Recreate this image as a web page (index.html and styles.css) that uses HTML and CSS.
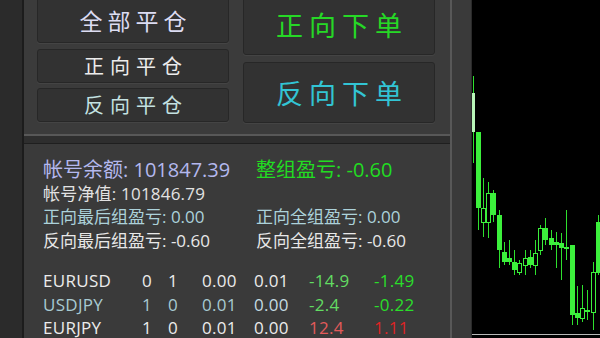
FILE: index.html
```html
<!DOCTYPE html>
<html lang="zh-CN">
<head>
<meta charset="utf-8">
<title>交易面板</title>
<link rel="stylesheet" href="styles.css">
</head>
<body>
<div class="app">
  <div class="rail"></div>
  <div class="panel">
    <div class="actions">
      <div class="col col-left">
        <button class="btn btn-all">全部平仓</button>
        <button class="btn btn-sm btn-long">正向平仓</button>
        <button class="btn btn-sm btn-short">反向平仓</button>
      </div>
      <div class="col col-right">
        <button class="btn btn-lg btn-buy">正向下单</button>
        <button class="btn btn-lg btn-sell">反向下单</button>
      </div>
    </div>
    <div class="info">
      <div class="stats">
        <div class="stat s-balance">帐号余额: 101847.39</div>
        <div class="stat s-total">整组盈亏: -0.60</div>
        <div class="stat s-equity">帐号净值: 101846.79</div>
        <div class="stat"></div>
        <div class="stat s-long">正向最后组盈亏: 0.00</div>
        <div class="stat s-long">正向全组盈亏: 0.00</div>
        <div class="stat s-short">反向最后组盈亏: -0.60</div>
        <div class="stat s-short">反向全组盈亏: -0.60</div>
      </div>
      <div class="table">
        <div class="row r-white">
          <span>EURUSD</span><span>0</span><span>1</span><span>0.00</span><span>0.01</span><span class="g1">-14.9</span><span class="g2">-1.49</span>
        </div>
        <div class="row r-cyan">
          <span>USDJPY</span><span>1</span><span>0</span><span>0.01</span><span class="c2">0.00</span><span class="g1">-2.4</span><span class="g2">-0.22</span>
        </div>
        <div class="row r-white">
          <span>EURJPY</span><span>1</span><span>0</span><span>0.01</span><span>0.00</span><span class="red1">12.4</span><span class="red2">1.11</span>
        </div>
      </div>
    </div>
  </div>
  <div class="gutter"></div>
  <div class="chart">
    <svg class="candles" width="128" height="338" viewBox="0 0 128 338">
      <g stroke="#2ee02e" stroke-width="1" shape-rendering="crispEdges">
        <line x1="1.5" y1="76" x2="1.5" y2="163"/>
        <line x1="6.5" y1="132" x2="6.5" y2="230"/>
        <line x1="11.5" y1="178" x2="11.5" y2="237"/>
        <line x1="16.5" y1="182" x2="16.5" y2="238"/>
        <line x1="21.5" y1="190" x2="21.5" y2="222"/>
        <line x1="27.5" y1="210" x2="27.5" y2="268"/>
        <line x1="32.5" y1="242" x2="32.5" y2="265"/>
        <line x1="37.5" y1="240" x2="37.5" y2="265"/>
        <line x1="42.5" y1="250" x2="42.5" y2="275"/>
        <line x1="47.5" y1="260" x2="47.5" y2="275"/>
        <line x1="53.5" y1="250" x2="53.5" y2="275"/>
        <line x1="58.5" y1="250" x2="58.5" y2="268"/>
        <line x1="63.5" y1="240" x2="63.5" y2="275"/>
        <line x1="68.5" y1="225" x2="68.5" y2="255"/>
        <line x1="73.5" y1="218" x2="73.5" y2="245"/>
        <line x1="79.5" y1="230" x2="79.5" y2="250"/>
        <line x1="84.5" y1="232" x2="84.5" y2="268"/>
        <line x1="89.5" y1="233" x2="89.5" y2="280"/>
        <line x1="94.5" y1="210" x2="94.5" y2="260"/>
        <line x1="100.5" y1="245" x2="100.5" y2="325"/>
        <line x1="105.5" y1="286" x2="105.5" y2="325"/>
        <line x1="110.5" y1="285" x2="110.5" y2="322"/>
        <line x1="115.5" y1="290" x2="115.5" y2="320"/>
        <line x1="121.5" y1="262" x2="121.5" y2="330"/>
        <line x1="126.5" y1="215" x2="126.5" y2="275"/>
      </g>
      <g fill="#3cf03c" shape-rendering="crispEdges">
        <rect x="0" y="93" width="3" height="39" fill="#b8f5b8"/>
        <rect x="4" y="132" width="5" height="76"/>
        <rect x="19" y="193" width="5" height="22"/>
        <rect x="25" y="215" width="5" height="35"/>
        <rect x="30" y="252" width="5" height="10"/>
        <rect x="35" y="258" width="5" height="4"/>
        <rect x="40" y="262" width="5" height="8"/>
        <rect x="56" y="257" width="5" height="8"/>
        <rect x="71" y="228" width="5" height="12"/>
        <rect x="77" y="238" width="5" height="7"/>
        <rect x="82" y="242" width="5" height="3"/>
        <rect x="87" y="243" width="5" height="5"/>
        <rect x="92" y="247" width="5" height="2"/>
        <rect x="98" y="245" width="5" height="70"/>
        <rect x="103" y="313" width="5" height="5"/>
        <rect x="113" y="310" width="5" height="2"/>
        <rect x="124" y="222" width="5" height="51"/>
      </g>
      <g fill="#000" stroke="#3cf03c" stroke-width="1" shape-rendering="crispEdges">
        <rect x="9.5" y="208.5" width="4" height="14"/>
        <rect x="14.5" y="193.5" width="4" height="29"/>
        <rect x="45.5" y="263.5" width="4" height="9"/>
        <rect x="51.5" y="258.5" width="4" height="7"/>
        <rect x="61.5" y="253.5" width="4" height="12"/>
        <rect x="66.5" y="228.5" width="4" height="22"/>
        <rect x="108.5" y="308.5" width="4" height="10"/>
        <rect x="119.5" y="272.5" width="4" height="40"/>
      </g>
      <line x1="0" y1="334.5" x2="128" y2="334.5" stroke="#b8b8b8" stroke-width="1"/>
    </svg>
  </div>
</div>
</body>
</html>
```

FILE: styles.css
```css
* {
  box-sizing: border-box;
}

html, body {
  margin: 0;
  padding: 0;
}

body {
  width: 600px;
  height: 338px;
  overflow: hidden;
  background: #2b2b2b;
  font-family: "Open Sans", "Noto Sans CJK SC", sans-serif;
}

.app {
  display: flex;
  height: 338px;
}

.rail {
  width: 24px;
  flex: none;
  background: #2b2b2b;
  border-right: 2px solid #1c1c1c;
}

.panel {
  width: 428px;
  flex: none;
  display: flex;
  flex-direction: column;
  background: #2e2e2e;
  border-right: 2px solid #585858;
}

.actions {
  margin-top: -6px;
  height: 142px;
  flex: none;
  display: flex;
  gap: 14px;
  padding-left: 13px;
  background: #3b3b3b;
  border-bottom: 2px solid #585858;
}

.col {
  width: 192px;
  display: flex;
  flex-direction: column;
}

.col-left {
  padding-top: 3px;
}

.btn {
  display: flex;
  align-items: center;
  justify-content: center;
  padding: 0;
  background: #323232;
  border: 1px solid #272727;
  border-radius: 3px;
  box-shadow: 0 1px 0 #444444;
  font-family: "Noto Sans CJK SC", sans-serif;
  font-weight: 400;
  line-height: 1;
}

.btn-all {
  height: 46px;
  font-size: 23px;
  letter-spacing: 5px;
  padding-left: 5px;
  color: #dcdcf2;
}

.btn-sm {
  height: 34px;
  font-size: 20px;
  letter-spacing: 6px;
  padding-left: 6px;
}

.btn-long {
  margin-top: 6px;
  color: #ececec;
}

.btn-short {
  margin-top: 5px;
  color: #c4e2e2;
}

.btn-lg {
  height: 61px;
  font-size: 27px;
  letter-spacing: 6px;
  padding-left: 6px;
}

.btn-buy {
  color: #26d826;
}

.btn-sell {
  margin-top: 7px;
  color: #32c4d4;
}

.info {
  flex: 1;
  margin-top: 7px;
  background: #3a3a3a;
  border-top: 1px solid #1f1f1f;
  padding: 14px 0 0 19px;
}

.stats {
  display: grid;
  grid-template-columns: 213px auto;
  grid-template-rows: 24px 22px 24px 24px;
  align-items: center;
  white-space: nowrap;
}

.stat {
  font-size: 17px;
  line-height: 1;
}

.s-balance {
  font-size: 20px;
  color: #b4b8ee;
}

.s-total {
  font-size: 20px;
  color: #22dc22;
}

.s-equity {
  font-size: 17px;
  letter-spacing: 0.2px;
  color: #e2e2e2;
}

.s-long {
  color: #acd2da;
}

.s-short {
  color: #e8e8e8;
}

.table {
  margin-top: 17px;
}

.row {
  display: grid;
  grid-template-columns: 99px 26px 34px 52px 55px 65px auto;
  height: 23.5px;
  align-items: center;
  font-size: 17px;
  letter-spacing: 0.3px;
  line-height: 1;
  white-space: nowrap;
}

.r-white {
  color: #ececec;
}

.r-cyan {
  color: #a8cad2;
}

.r-cyan .c2 {
  color: #c4dce2;
}

.g1 {
  color: #62dc62;
}

.g2 {
  color: #2ade2a;
}

.red1 {
  color: #e25a5a;
}

.red2 {
  color: #de2424;
}

.gutter {
  width: 20px;
  flex: none;
  background: #3a3a3a;
  border-right: 1px solid #2a2a2a;
}

.chart {
  flex: 1;
  background: #000;
  overflow: hidden;
}

.candles {
  display: block;
}
```
